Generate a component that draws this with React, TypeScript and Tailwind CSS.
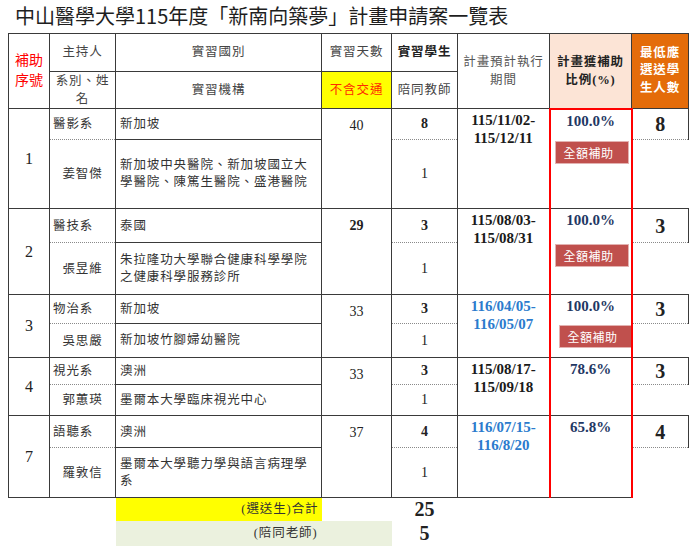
import React from 'react';

type Group = {
  seq: string;
  dept: string;
  country: string;
  name: string;
  org: string;
  days: string;
  daysBold?: boolean;
  students: string;
  teachers: string;
  from: string;
  to: string;
  blue?: boolean;
  pct: string;
  badge?: string; // badge offset classes, when the row is fully funded
  min: string;
  topH: string;
  lowH: string;
};

const groups: Group[] = [
  {
    seq: '1', dept: '醫影系', country: '新加坡', name: '姜智傑',
    org: '新加坡中央醫院、新加坡國立大學醫院、陳篤生醫院、盛港醫院',
    days: '40', students: '8', teachers: '1', from: '115/11/02-', to: '115/12/11',
    pct: '100.0%', badge: 'mt-[11px] ml-[4px]', min: '8', topH: 'h-[31px]', lowH: 'h-[69px]',
  },
  {
    seq: '2', dept: '醫技系', country: '泰國', name: '張昱維',
    org: '朱拉隆功大學聯合健康科學學院之健康科學服務診所',
    days: '29', daysBold: true, students: '3', teachers: '1', from: '115/08/03-', to: '115/08/31',
    pct: '100.0%', badge: 'mt-[15px] ml-[4px]', min: '3', topH: 'h-[34px]', lowH: 'h-[52px]',
  },
  {
    seq: '3', dept: '物治系', country: '新加坡', name: '吳思嚴',
    org: '新加坡竹腳婦幼醫院',
    days: '33', students: '3', teachers: '1', from: '116/04/05-', to: '116/05/07', blue: true,
    pct: '100.0%', badge: 'mt-[10px] ml-[8px]', min: '3', topH: 'h-[29px]', lowH: 'h-[34px]',
  },
  {
    seq: '4', dept: '視光系', country: '澳洲', name: '郭蕙瑛',
    org: '墨爾本大學臨床視光中心',
    days: '33', students: '3', teachers: '1', from: '115/08/17-', to: '115/09/18',
    pct: '78.6%', min: '3', topH: 'h-[27px]', lowH: 'h-[31px]',
  },
  {
    seq: '7', dept: '語聽系', country: '澳洲', name: '羅敦信',
    org: '墨爾本大學聽力學與語言病理學系',
    days: '37', students: '4', teachers: '1', from: '116/07/15-', to: '116/8/20', blue: true,
    pct: '65.8%', min: '4', topH: 'h-[32px]', lowH: 'h-[50px]',
  },
];

const cjk = 'text-[12.5px] tracking-[0.9px]';
const line = 'border border-[#3a3a3a]';

export default function App() {
  return (
    <div className="w-[700px] h-[551px] bg-white font-['Liberation_Serif','Noto_Sans_CJK_TC',serif] text-[#222]">
      <h1 className="pl-[15px] pt-[4px] mb-[5px] text-[20px] leading-[24px] font-normal font-['Noto_Sans_CJK_TC',sans-serif] text-[#1e1e1e]">
        中山醫學大學115年度「新南向築夢」計畫申請案一覽表
      </h1>

      <table className="ml-[8px] w-[680px] table-fixed border-collapse">
        <colgroup>
          <col className="w-[41px]" />
          <col className="w-[66px]" />
          <col className="w-[206px]" />
          <col className="w-[70px]" />
          <col className="w-[66px]" />
          <col className="w-[92px]" />
          <col className="w-[82px]" />
          <col className="w-[57px]" />
        </colgroup>
        <tbody>
          {/* header */}
          <tr className="h-[38px]">
            <td rowSpan={2} className={`${line} text-center text-[14px] leading-[20px] text-[#ff0000]`}>
              補助<br />序號
            </td>
            <td className={`${line} ${cjk} text-center text-[#444]`}>主持人</td>
            <td className={`${line} ${cjk} text-center text-[#444]`}>實習國別</td>
            <td className={`${line} ${cjk} text-center text-[#444]`}>實習天數</td>
            <td className={`${line} ${cjk} text-center font-bold text-[#222]`}>實習學生</td>
            <td rowSpan={2} className={`${line} ${cjk} text-center leading-[18px] text-[#555]`}>
              計畫預計執行<br />期間
            </td>
            <td rowSpan={2} className={`${line} ${cjk} text-center leading-[18px] font-bold bg-[#fce4d6] text-[#222]`}>
              計畫獲補助<br />比例(%)
            </td>
            <td rowSpan={2} className={`${line} ${cjk} text-center leading-[17.5px] font-bold bg-[#e46c0a] text-white`}>
              最低應<br />選送學<br />生人數
            </td>
          </tr>
          <tr className="h-[36px]">
            <td className={`${line} ${cjk} text-center leading-[18px] text-[#444]`}>
              系別、姓<br />名
            </td>
            <td className={`${line} ${cjk} text-center text-[#444]`}>實習機構</td>
            <td className={`${line} ${cjk} text-center bg-[#ffff00] text-[#ff2a00]`}>不含交通</td>
            <td className={`${line} ${cjk} text-center text-[#444]`}>陪同教師</td>
          </tr>

          {groups.map((g, i) => {
            const first = i === 0;
            return (
              <React.Fragment key={g.seq}>
                <tr className={g.topH}>
                  <td rowSpan={2} className={`${line} text-center text-[16px] leading-[18px]`}>{g.seq}</td>
                  <td className={`border-x border-t border-b border-[#3a3a3a] [border-bottom-style:dotted] border-b-[#8a8a8a] ${cjk} leading-[18px] pl-[3px] text-[#333]`}>
                    {g.dept}
                  </td>
                  <td className={`${line} ${cjk} leading-[18px] pl-[4px] text-[#333]`}>{g.country}</td>
                  <td rowSpan={2} className={`${line} align-top pt-[8px] text-center text-[14px] leading-[18px] ${g.daysBold ? 'font-bold' : ''}`}>
                    {g.days}
                  </td>
                  <td className="border-x border-t border-b border-[#3a3a3a] [border-bottom-style:dotted] border-b-[#8a8a8a] text-center text-[14px] leading-[18px] font-bold">
                    {g.students}
                  </td>
                  <td rowSpan={2} className={`${line} align-top pt-[2px] text-center text-[15px] leading-[18px] font-bold ${g.blue ? 'text-[#2b7bcd]' : 'text-[#1a1a1a]'}`}>
                    {g.from}<br />{g.to}
                  </td>
                  <td rowSpan={2} className={`border-x-2 border-x-[#ff0000] border-b border-b-[#3a3a3a] ${first ? 'border-t-2 border-t-[#ff0000]' : ''} align-top pt-[3px] text-center`}>
                    <div className="text-[15px] leading-[17px] font-bold text-[#1f3864]">{g.pct}</div>
                    {g.badge && (
                      <div className={`${g.badge} w-[74px] h-[23px] bg-[#c0504d] border border-[#e3b2b1] pl-[8px] text-left text-[12px] leading-[21px] tracking-[0.5px] text-white font-['Noto_Sans_CJK_TC',sans-serif]`}>
                        全額補助
                      </div>
                    )}
                  </td>
                  <td className="border-t border-r border-b border-[#3a3a3a] [border-bottom-style:dotted] border-b-[#8a8a8a] text-center text-[20px] leading-[20px] font-bold">
                    {g.min}
                  </td>
                </tr>
                <tr className={g.lowH}>
                  <td className={`border-x border-b border-[#3a3a3a] ${cjk} leading-[18px] text-center text-[#333]`}>{g.name}</td>
                  <td className={`${line} ${cjk} pl-[4px] pr-[10px] leading-[17px] text-[#333]`}>{g.org}</td>
                  <td className="border-x border-b border-[#3a3a3a] text-center text-[14px] leading-[18px]">{g.teachers}</td>
                  <td className="border-0"></td>
                </tr>
              </React.Fragment>
            );
          })}

          {/* totals */}
          <tr className="h-[23px]">
            <td colSpan={2}></td>
            <td className={`${cjk} leading-[18px] bg-[#ffff00] text-right pr-[3px] text-[#333]`}>(選送生)合計</td>
            <td></td>
            <td className="text-center text-[20px] leading-[22px] font-bold">25</td>
            <td colSpan={3}></td>
          </tr>
          <tr className="h-[25px]">
            <td colSpan={2}></td>
            <td className={`${cjk} leading-[18px] bg-[#ebf1de] text-right pr-[4px] text-[#333]`}>(陪同老師)</td>
            <td className="bg-[#ebf1de]"></td>
            <td className="text-center text-[20px] leading-[22px] font-bold">5</td>
            <td colSpan={3}></td>
          </tr>
        </tbody>
      </table>
    </div>
  );
}
